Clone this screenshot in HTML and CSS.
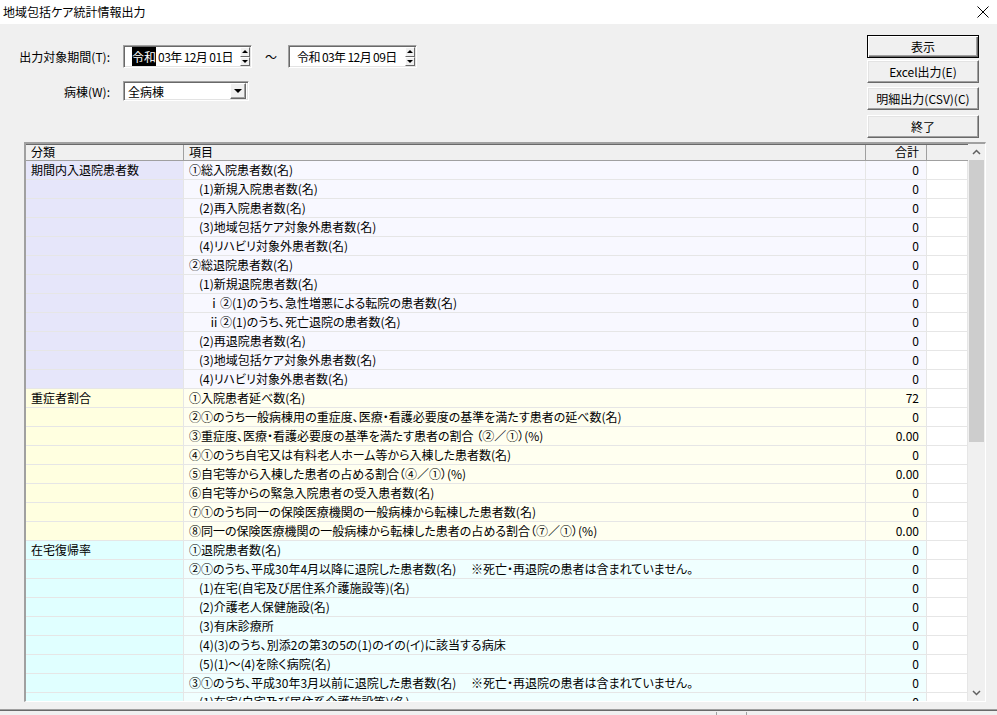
FILE: index.html
```html
<!DOCTYPE html>
<html lang="ja">
<head>
<meta charset="utf-8">
<title>地域包括ケア統計情報出力</title>
<link rel="stylesheet" href="styles.css">
</head>
<body>
<div class="window">
  <div class="titlebar">
    <span class="title">地域包括ケア統計情報出力</span>
    <svg class="close" width="12" height="12" viewBox="0 0 12 12"><path d="M0.5 0.5 L11.5 11.5 M11.5 0.5 L0.5 11.5" stroke="#000" stroke-width="1" fill="none"/></svg>
  </div>

  <div class="top">
    <div class="form">
      <span class="lbl">出力対象期間(T):</span>
      <div class="daterow">
        <div class="datebox">
          <span class="dtext"><span class="sel">令和</span> 03年 12月 01日</span>
          <span class="spin"><span class="sb"><span class="tri-up"></span></span><span class="sb"><span class="tri-dn"></span></span></span>
        </div>
        <span class="tilde">～</span>
        <div class="datebox">
          <span class="dtext">令和 03年 12月 09日</span>
          <span class="spin"><span class="sb"><span class="tri-up"></span></span><span class="sb"><span class="tri-dn"></span></span></span>
        </div>
      </div>
      <span class="lbl">病棟(W):</span>
      <div class="combo">
        <span class="ctext">全病棟</span>
        <span class="ddbtn"><span class="tri-dd"></span></span>
      </div>
    </div>
    <div class="buttons">
      <div class="btn default b1">表示</div>
      <div class="btn b2">Excel出力(E)</div>
      <div class="btn b3">明細出力(CSV)(C)</div>
      <div class="btn b4">終了</div>
    </div>
  </div>

  <div class="gridframe">
    <div class="gridmain">
      <div class="hrow">
        <div class="hc c1">分類</div>
        <div class="hc c2">項目</div>
        <div class="hc c3 num">合計</div>
        <div class="hc c4"></div>
      </div>
      <div class="body">
        <div class="row g1"><div class="c c1">期間内入退院患者数</div><div class="c c2">①総入院患者数(名)</div><div class="c c3 num">0</div><div class="c c4"></div></div>
        <div class="row g1"><div class="c c1"></div><div class="c c2 i1">(1)新規入院患者数(名)</div><div class="c c3 num">0</div><div class="c c4"></div></div>
        <div class="row g1"><div class="c c1"></div><div class="c c2 i1">(2)再入院患者数(名)</div><div class="c c3 num">0</div><div class="c c4"></div></div>
        <div class="row g1"><div class="c c1"></div><div class="c c2 i1">(3)地域包括ケア対象外患者数(名)</div><div class="c c3 num">0</div><div class="c c4"></div></div>
        <div class="row g1"><div class="c c1"></div><div class="c c2 i1">(4)リハビリ対象外患者数(名)</div><div class="c c3 num">0</div><div class="c c4"></div></div>
        <div class="row g1"><div class="c c1"></div><div class="c c2">②総退院患者数(名)</div><div class="c c3 num">0</div><div class="c c4"></div></div>
        <div class="row g1"><div class="c c1"></div><div class="c c2 i1">(1)新規退院患者数(名)</div><div class="c c3 num">0</div><div class="c c4"></div></div>
        <div class="row g1"><div class="c c1"></div><div class="c c2 i2">ⅰ②(1)のうち、急性増悪による転院の患者数(名)</div><div class="c c3 num">0</div><div class="c c4"></div></div>
        <div class="row g1"><div class="c c1"></div><div class="c c2 i2">ⅱ②(1)のうち、死亡退院の患者数(名)</div><div class="c c3 num">0</div><div class="c c4"></div></div>
        <div class="row g1"><div class="c c1"></div><div class="c c2 i1">(2)再退院患者数(名)</div><div class="c c3 num">0</div><div class="c c4"></div></div>
        <div class="row g1"><div class="c c1"></div><div class="c c2 i1">(3)地域包括ケア対象外患者数(名)</div><div class="c c3 num">0</div><div class="c c4"></div></div>
        <div class="row g1"><div class="c c1"></div><div class="c c2 i1">(4)リハビリ対象外患者数(名)</div><div class="c c3 num">0</div><div class="c c4"></div></div>

        <div class="row g2"><div class="c c1">重症者割合</div><div class="c c2">①入院患者延べ数(名)</div><div class="c c3 num">72</div><div class="c c4"></div></div>
        <div class="row g2"><div class="c c1"></div><div class="c c2">②①のうち一般病棟用の重症度、医療・看護必要度の基準を満たす患者の延べ数(名)</div><div class="c c3 num">0</div><div class="c c4"></div></div>
        <div class="row g2"><div class="c c1"></div><div class="c c2">③重症度、医療・看護必要度の基準を満たす患者の割合 （②／①）(%)</div><div class="c c3 num">0.00</div><div class="c c4"></div></div>
        <div class="row g2"><div class="c c1"></div><div class="c c2">④①のうち自宅又は有料老人ホーム等から入棟した患者数(名)</div><div class="c c3 num">0</div><div class="c c4"></div></div>
        <div class="row g2"><div class="c c1"></div><div class="c c2">⑤自宅等から入棟した患者の占める割合（④／①）(%)</div><div class="c c3 num">0.00</div><div class="c c4"></div></div>
        <div class="row g2"><div class="c c1"></div><div class="c c2">⑥自宅等からの緊急入院患者の受入患者数(名)</div><div class="c c3 num">0</div><div class="c c4"></div></div>
        <div class="row g2"><div class="c c1"></div><div class="c c2">⑦①のうち同一の保険医療機関の一般病棟から転棟した患者数(名)</div><div class="c c3 num">0</div><div class="c c4"></div></div>
        <div class="row g2"><div class="c c1"></div><div class="c c2">⑧同一の保険医療機関の一般病棟から転棟した患者の占める割合（⑦／①）(%)</div><div class="c c3 num">0.00</div><div class="c c4"></div></div>

        <div class="row g3"><div class="c c1">在宅復帰率</div><div class="c c2">①退院患者数(名)</div><div class="c c3 num">0</div><div class="c c4"></div></div>
        <div class="row g3"><div class="c c1"></div><div class="c c2">②①のうち、平成30年4月以降に退院した患者数(名)　 ※死亡・再退院の患者は含まれていません。</div><div class="c c3 num">0</div><div class="c c4"></div></div>
        <div class="row g3"><div class="c c1"></div><div class="c c2 i1">(1)在宅(自宅及び居住系介護施設等)(名)</div><div class="c c3 num">0</div><div class="c c4"></div></div>
        <div class="row g3"><div class="c c1"></div><div class="c c2 i1">(2)介護老人保健施設(名)</div><div class="c c3 num">0</div><div class="c c4"></div></div>
        <div class="row g3"><div class="c c1"></div><div class="c c2 i1">(3)有床診療所</div><div class="c c3 num">0</div><div class="c c4"></div></div>
        <div class="row g3"><div class="c c1"></div><div class="c c2 i1">(4)(3)のうち、別添2の第3の5の(1)のイの(イ)に該当する病床</div><div class="c c3 num">0</div><div class="c c4"></div></div>
        <div class="row g3"><div class="c c1"></div><div class="c c2 i1">(5)(1)～(4)を除く病院(名)</div><div class="c c3 num">0</div><div class="c c4"></div></div>
        <div class="row g3"><div class="c c1"></div><div class="c c2">③①のうち、平成30年3月以前に退院した患者数(名)　 ※死亡・再退院の患者は含まれていません。</div><div class="c c3 num">0</div><div class="c c4"></div></div>
        <div class="row g3"><div class="c c1"></div><div class="c c2 i1">(1)在宅(自宅及び居住系介護施設等)(名)</div><div class="c c3 num">0</div><div class="c c4"></div></div>
      </div>
    </div>
    <div class="vscroll">
      <div class="sarrow"><svg width="9" height="6" viewBox="0 0 9 6"><path d="M1 5 L4.5 1.5 L8 5" stroke="#606060" stroke-width="1.5" fill="none"/></svg></div>
      <div class="strack"><div class="thumb"></div></div>
      <div class="sarrow"><svg width="9" height="6" viewBox="0 0 9 6"><path d="M1 1 L4.5 4.5 L8 1" stroke="#606060" stroke-width="1.5" fill="none"/></svg></div>
    </div>
  </div>

  <div class="statusbar">
    <span class="sp sp1"></span><span class="sp sp2"></span>
  </div>
</div>
</body>
</html>
```

FILE: styles.css
```css
* { box-sizing: border-box; margin: 0; padding: 0; }
html, body { width: 997px; height: 715px; overflow: hidden; }
body {
  background: #f0f0f0;
  font-family: "Noto Sans CJK JP", "Noto Sans", sans-serif;
  font-size: 12px;
  color: #000;
  font-feature-settings: "palt";
}
.window { width: 997px; height: 715px; display: flex; flex-direction: column; }

.titlebar {
  height: 24px; flex: none; background: #fff;
  display: flex; align-items: center; justify-content: space-between;
  padding: 0 8px 0 3px;
}
.title { line-height: 14px; }
.close { display: block; }

.top { height: 118px; flex: none; display: flex; justify-content: space-between; }
.form {
  display: grid; grid-template-columns: 94px auto;
  column-gap: 13px; row-gap: 13px;
  padding: 21px 0 0 16px; align-content: start; align-items: center;
}
.lbl { text-align: right; white-space: nowrap; }
.daterow { display: flex; align-items: center; height: 23px; }
.datebox {
  width: 129px; height: 23px; background: #fff;
  border: 1px solid; border-color: #a0a0a0 #fff #fff #a0a0a0;
  box-shadow: inset 1px 1px 0 #696969, inset -1px -1px 0 #e3e3e3;
  display: flex; align-items: center; justify-content: space-between;
  padding: 0 1px 0 8px;
}
.dtext { white-space: pre; line-height: 14px; letter-spacing: -0.6px; }
.sel { background: #000; color: #fff; padding: 1px 0; letter-spacing: 0; }
.spin { display: flex; flex-direction: column; width: 10px; height: 19px; }
.sb {
  flex: 1; background: #f0f0f0; display: flex; align-items: center; justify-content: center;
  border: 1px solid; border-color: #fff #696969 #696969 #fff;
}
.tri-up { width: 0; height: 0; border-left: 3px solid transparent; border-right: 3px solid transparent; border-bottom: 3px solid #000; }
.tri-dn { width: 0; height: 0; border-left: 3px solid transparent; border-right: 3px solid transparent; border-top: 3px solid #000; }
.tilde { margin: 0 11px 0 13px; }

.combo {
  width: 126px; height: 20px; background: #fff;
  border: 1px solid; border-color: #a0a0a0 #fff #fff #a0a0a0;
  box-shadow: inset 1px 1px 0 #696969, inset -1px -1px 0 #e3e3e3;
  display: flex; align-items: center; justify-content: space-between;
  padding: 0 2px 0 4px;
}
.ddbtn {
  width: 16px; height: 16px; background: #f0f0f0;
  border: 1px solid; border-color: #fff #696969 #696969 #fff;
  box-shadow: inset -1px -1px 0 #a0a0a0;
  display: flex; align-items: center; justify-content: center;
}
.tri-dd { width: 0; height: 0; border-left: 4px solid transparent; border-right: 4px solid transparent; border-top: 4px solid #000; }

.buttons { display: flex; flex-direction: column; padding-top: 11px; margin-right: 18px; }
.btn {
  width: 112px; height: 23px; background: #f0f0f0;
  border: 1px solid; border-color: #fff #696969 #696969 #fff;
  box-shadow: inset -1px -1px 0 #a0a0a0, inset 1px 1px 0 #e3e3e3;
  display: flex; align-items: center; justify-content: center;
  white-space: nowrap; font-feature-settings: normal;
}
.btn.default {
  border-color: #000;
  box-shadow: inset 1px 1px 0 #fff, inset -1px -1px 0 #696969, inset -2px -2px 0 #a0a0a0;
}
.b2 { margin-top: 2px; }
.b3 { margin-top: 4px; }
.b4 { margin-top: 5px; }

.gridframe {
  margin-left: 24px; width: 962px; height: 560px; flex: none;
  border-style: solid; border-width: 2px 1px 1px 2px;
  border-color: #a0a0a0 #fff #fff #a0a0a0;
  box-shadow: inset 1px 1px 0 #696969;
  display: flex; background: #f0f0f0;
}
.gridmain { width: 942px; height: 100%; overflow: hidden; }
.hrow { display: flex; height: 16px; background: #f0f0f0; border-bottom: 1px solid #a0a0a0; margin-top: 1px; }
.hc { line-height: 14px; padding-left: 5px; border-right: 1px solid #a0a0a0; white-space: nowrap; }
.hc.c4 { border-right: none; }
.c1 { width: 158px; flex: none; }
.c2 { width: 682px; flex: none; }
.c3 { width: 61px; flex: none; }
.c4 { width: 41px; flex: none; }
.hc.num { text-align: right; padding-right: 7px; padding-left: 0; }

.body { display: flex; flex-direction: column; }
.row { display: flex; height: 19px; flex: none; }
.c {
  height: 19px; line-height: 18px; padding-left: 5px; white-space: pre;
  border-bottom: 1px solid #e6e6e6; border-right: 1px solid #e6e6e6; overflow: hidden;
}
.c.num { text-align: right; padding-left: 0; padding-right: 7px; }
.c.c4 { background: #fff; }
.c2.i1 { padding-left: 15px; }
.c2.i2 { padding-left: 24px; }

.g1 .c1 { background: #e6e6fa; }
.g1 .c2, .g1 .c3 { background: #f8f8ff; }
.g2 .c1 { background: #ffffe0; }
.g2 .c2, .g2 .c3 { background: #fffff0; }
.g3 .c1 { background: #e0ffff; }
.g3 .c2, .g3 .c3 { background: #f0ffff; }

.vscroll { width: 17px; flex: none; display: flex; flex-direction: column; background: #f0f0f0; }
.sarrow { height: 16px; flex: none; display: flex; align-items: center; justify-content: center; }
.sarrow svg { display: block; }
.strack { flex: 1; display: flex; flex-direction: column; padding: 0 1px; }
.thumb { height: 282px; background: #cdcdcd; }

.statusbar {
  flex: 1; margin-top: 7px;
  border-top: 1px solid #a0a0a0; box-shadow: inset 0 1px 0 #696969;
  display: flex; align-items: stretch; padding-left: 716px;
}
.sp { width: 1px; background: #a0a0a0; margin-top: 2px; }
.sp2 { margin-left: 29px; }
```
